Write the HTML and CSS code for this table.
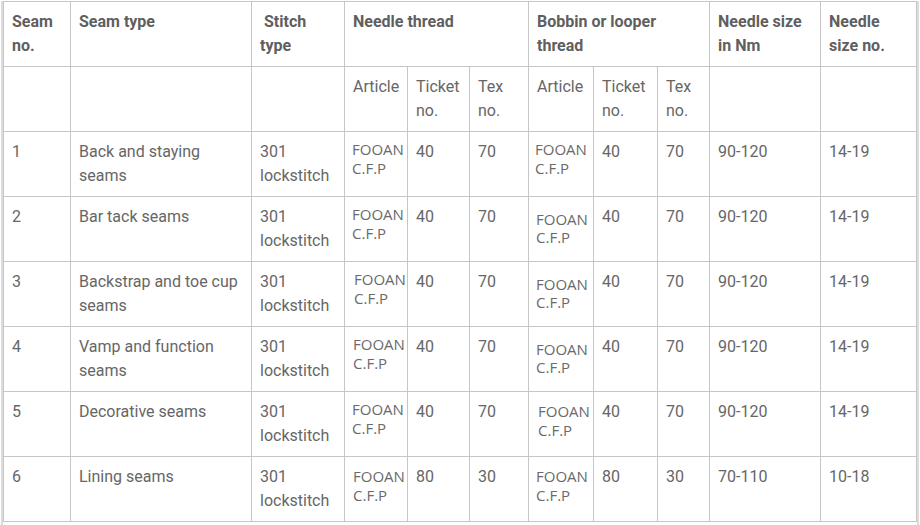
FILE: index.html
```html
<!DOCTYPE html>
<html lang="en">
<head>
<meta charset="utf-8">
<title>Seam table</title>
<link rel="stylesheet" href="styles.css">
</head>
<body>
<div class="frame">
<table class="seams">
<colgroup>
<col class="c1"><col class="c2"><col class="c3"><col class="c4"><col class="c5"><col class="c6"><col class="c7"><col class="c8"><col class="c9"><col class="c10"><col class="c11">
</colgroup>
<tbody>
<tr class="head">
<td>Seam no.</td>
<td>Seam type</td>
<td>&nbsp;Stitch type</td>
<td colspan="3">Needle thread</td>
<td colspan="3">Bobbin or looper thread</td>
<td>Needle size in Nm</td>
<td>Needle size no.</td>
</tr>
<tr>
<td></td><td></td><td></td>
<td>Article</td><td>Ticket no.</td><td>Tex no.</td>
<td>Article</td><td>Ticket no.</td><td>Tex no.</td>
<td></td><td></td>
</tr>
<tr>
<td>1</td><td>Back and staying seams</td><td>301 lockstitch</td>
<td class="art">FOOAN C.F.P</td><td>40</td><td>70</td>
<td class="art tight">FOOAN C.F.P</td><td>40</td><td>70</td>
<td>90-120</td><td>14-19</td>
</tr>
<tr>
<td>2</td><td>Bar tack seams</td><td>301 lockstitch</td>
<td class="art">FOOAN C.F.P</td><td>40</td><td>70</td>
<td class="art low">FOOAN C.F.P</td><td>40</td><td>70</td>
<td>90-120</td><td>14-19</td>
</tr>
<tr>
<td>3</td><td>Backstrap and toe cup seams</td><td>301 lockstitch</td>
<td class="art inset">FOOAN C.F.P</td><td>40</td><td>70</td>
<td class="art low">FOOAN C.F.P</td><td>40</td><td>70</td>
<td>90-120</td><td>14-19</td>
</tr>
<tr>
<td>4</td><td>Vamp and function seams</td><td>301 lockstitch</td>
<td class="art nudge">FOOAN C.F.P</td><td>40</td><td>70</td>
<td class="art low">FOOAN C.F.P</td><td>40</td><td>70</td>
<td>90-120</td><td>14-19</td>
</tr>
<tr>
<td>5</td><td>Decorative seams</td><td>301 lockstitch</td>
<td class="art">FOOAN C.F.P</td><td>40</td><td>70</td>
<td class="art mid inset">FOOAN C.F.P</td><td>40</td><td>70</td>
<td>90-120</td><td>14-19</td>
</tr>
<tr>
<td>6</td><td>Lining seams</td><td>301 lockstitch</td>
<td class="art mid nudge">FOOAN C.F.P</td><td>80</td><td>30</td>
<td class="art mid">FOOAN C.F.P</td><td>80</td><td>30</td>
<td>70-110</td><td>10-18</td>
</tr>
</tbody>
</table>
</div>
</body>
</html>
```

FILE: styles.css
```css
html, body {
  margin: 0;
  padding: 0;
  background: #ffffff;
}

.frame {
  margin-left: 1px;
  width: 914px;
  height: 525px;
  border-left: 2px solid #dcdcdc;
  border-right: 2px solid #dcdcdc;
  box-sizing: content-box;
}

.seams {
  margin-top: 1px;
  width: 914px;
  table-layout: fixed;
  border-collapse: collapse;
  font-family: Roboto, "Liberation Sans", sans-serif;
  font-size: 16px;
  line-height: 24px;
  color: #666666;
}

.c1 { width: 67px; }
.c2 { width: 181px; }
.c3 { width: 93px; }
.c4 { width: 63px; }
.c5 { width: 62px; }
.c6 { width: 59px; }
.c7 { width: 65px; }
.c8 { width: 64px; }
.c9 { width: 52px; }
.c10 { width: 111px; }
.c11 { width: 96px; }

.seams td {
  border: 1px solid #c6c6c6;
  padding: 8px;
  height: 48px;
  vertical-align: top;
  overflow: visible;
}

.head td {
  font-weight: 700;
  color: #5f5f5f;
}

.seams td.art {
  font-family: "Open Sans", "DejaVu Sans", sans-serif;
  font-size: 15px;
  line-height: 19px;
  color: #6a6a6a;
  padding-left: 7px;
  padding-right: 0;
}

.seams td.tight {
  padding-left: 6px;
}

.seams td.low {
  padding-top: 13px;
  padding-bottom: 3px;
  line-height: 18px;
}

.seams td.mid {
  padding-top: 10px;
  padding-bottom: 6px;
  line-height: 19px;
}

.seams td.nudge {
  padding-left: 8px;
}

.seams td.inset {
  padding-left: 9px;
}
```
